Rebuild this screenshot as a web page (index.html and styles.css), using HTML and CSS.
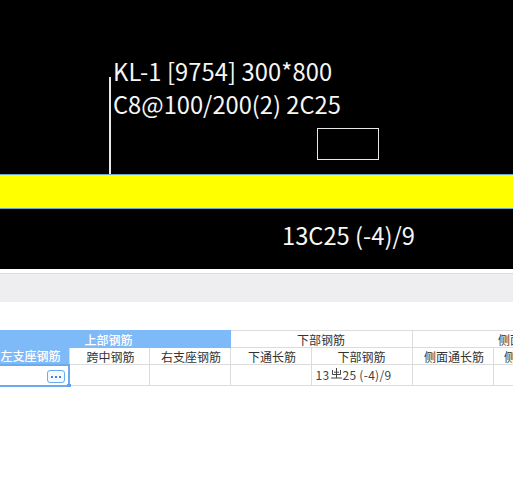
FILE: index.html
```html
<!DOCTYPE html>
<html lang="zh">
<head>
<meta charset="utf-8">
<title>KL-1</title>
<link rel="stylesheet" href="styles.css">
</head>
<body>
<section class="canvas">
  <div class="leader"></div>
  <div class="label label-top"><div class="line-one">KL-1 [9754] 300*800</div><div class="line-two">C8@100/200(2) 2C25</div></div>
  <div class="edit-box"></div>
  <div class="beam"></div>
  <div class="label label-bottom">13C25 (-4)/9</div>
</section>
<div class="toolbar"></div>
<section class="grid-wrap">
  <table class="grid">
    <colgroup>
      <col class="c1"><col class="c2"><col class="c3"><col class="c4"><col class="c5"><col class="c6"><col class="c7"><col class="c8">
    </colgroup>
    <tr class="head">
      <th colspan="3" class="band">上部钢筋</th>
      <th colspan="2">下部钢筋</th>
      <th colspan="3">侧面钢筋</th>
    </tr>
    <tr class="head">
      <th class="active-head">左支座钢筋</th>
      <th class="nudge">跨中钢筋</th>
      <th class="nudge">右支座钢筋</th>
      <th class="nudge">下通长筋</th>
      <th>下部钢筋</th>
      <th class="nudge">侧面通长筋</th>
      <th>侧面原位筋</th>
      <th>拉筋</th>
    </tr>
    <tr class="data">
      <td class="active-cell"><span class="more"><i></i><i></i><i></i></span><span class="handle"></span></td>
      <td></td>
      <td></td>
      <td></td>
      <td class="value">13<svg class="rebar" viewBox="0 0 11 11" aria-hidden="true"><path d="M1.5 2V6.5H9.5V2M5.5 0V10M0 10H11M3 4.2H8" fill="none" stroke="#444" stroke-width="1"/></svg>25 (-4)/9</td>
      <td></td>
      <td></td>
      <td></td>
    </tr>
  </table>
</section>
</body>
</html>
```
FILE: styles.css
```css
* { box-sizing: border-box; }
html, body { margin: 0; padding: 0; width: 513px; height: 490px; overflow: hidden; background: #fff; }
body { font-family: "Noto Sans CJK SC", "Noto Sans", sans-serif; }

.canvas { position: relative; height: 269px; background: #000; overflow: hidden; }
.leader { position: absolute; left: 109px; top: 77px; width: 2px; height: 97px; background: #e8e8e8; }
.label { position: absolute; color: #f6f6f6; font-size: 23.7px; font-weight: 400; white-space: nowrap; }
.label-top { left: 113px; top: 55px; line-height: 33px; }
.line-one { letter-spacing: 0.1px; }
.label-bottom { left: 282px; top: 218px; line-height: 34px; }
.edit-box { position: absolute; left: 317px; top: 128px; width: 62px; height: 32px; border: 1px solid #e8e8e8; }
.beam { position: absolute; left: 0; top: 174px; width: 100%; height: 35px; background: #ff0; border-top: 1px solid #6fa8c8; border-bottom: 1px solid #6fa8c8; }

.toolbar { height: 29px; margin-top: 4px; background: #eeeef0; border-top: 1px solid #dedede; }

.grid-wrap { margin-top: 28px; width: 513px; overflow: hidden; }
.grid { border-collapse: collapse; table-layout: fixed; width: 641px; margin-left: -10px; font-size: 12px; color: #333; }
.c1 { width: 78px; } .c2 { width: 80px; } .c3 { width: 81px; } .c4 { width: 81px; }
.c5 { width: 101px; } .c6 { width: 81px; } .c7 { width: 82px; } .c8 { width: 57px; }
.grid th, .grid td { border: 1px solid #dcdcdc; padding: 0; font-weight: 400; text-align: center; white-space: nowrap; overflow: hidden; }
.grid .head { height: 17px; }
.grid .head th { line-height: 15px; }
.grid .data { height: 21px; }
.grid .data td { line-height: 18px; }
.grid .band { background: #7fbaf8; color: #fff; font-weight: 500; border-color: #7fbaf8; padding-right: 4px; }
.grid .nudge { padding-left: 3px; }
.grid .active-head { background: #7fbaf8; color: #fff; font-weight: 500; padding-left: 1px; }
.grid .active-cell { position: relative; border: 2px solid #6aaaee; overflow: visible; text-align: right; }
.grid .value { text-align: left; padding-left: 4px; color: #444; letter-spacing: 0.3px; }
.rebar { display: inline-block; width: 11px; height: 11px; margin: 0 0 0 2px; vertical-align: 1px; }
.more { display: inline-flex; justify-content: center; align-items: center; gap: 2px; width: 18px; height: 13px; margin-right: 3px; border: 1px solid #6aaaee; border-radius: 3px; background: #f5f8fc; vertical-align: middle; }
.more i { width: 2px; height: 2px; background: #3d85e0; }
.handle { position: absolute; right: -3px; bottom: -3px; width: 4px; height: 4px; background: #5ea2ee; }
```
